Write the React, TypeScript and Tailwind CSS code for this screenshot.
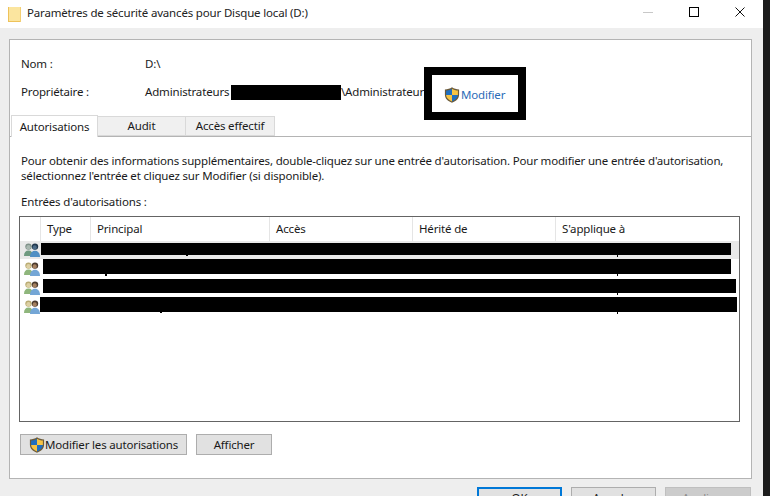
const font = { fontFamily: '"Noto Sans", "Open Sans", sans-serif' };

function Shield({ size = 16 }: { size?: number }) {
  return (
    <svg width={size} height={size} viewBox="0 0 16 16" className="shrink-0">
      <path d="M8 .3C6 1.700 3.600 2.400.9 2.500v5.200c0 3.600 2.700 6.400 7.100 8 4.400-1.600 7.100-4.400 7.100-8V2.500C12.400 2.400 10 1.700 8 .3z" fill="#6b5a3a" />
      <path d="M8 1.800C6.300 2.900 4.300 3.500 2.100 3.600V8H8z" fill="#1f6fc0" />
      <path d="M8 1.800c1.700 1.100 3.700 1.700 5.900 1.800V8H8z" fill="#f7c444" />
      <path d="M2.100 8H8v6.400C4.600 13 2.200 10.900 2.100 8z" fill="#f7c444" />
      <path d="M13.900 8H8v6.400c3.400-1.400 5.800-3.500 5.900-6.400z" fill="#1f6fc0" />
    </svg>
  );
}

function Users({ tone = 'normal' }: { tone?: 'normal' | 'cool' }) {
  const hair = tone === 'cool' ? '#7f9189' : '#b9ab72';
  const face = tone === 'cool' ? '#a9b8b0' : '#ddd0a4';
  const backBody = tone === 'cool' ? '#6f9a80' : '#8fb67c';
  const frontHair = tone === 'cool' ? '#22384d' : '#4a3a2e';
  const frontFace = tone === 'cool' ? '#4a6a86' : '#a5805f';
  const frontBody = tone === 'cool' ? '#4f8fc4' : '#74a6d6';
  return (
    <svg width="16" height="14" viewBox="0 0 16 14" className="shrink-0">
      <circle cx="4.500" cy="3.600" r="3.200" fill={hair} />
      <ellipse cx="4.500" cy="4.300" rx="2.200" ry="2.300" fill={face} />
      <path d="M0 13c0-3.600 1.700-5.500 4.500-5.500S9 9.400 9 13z" fill={backBody} />
      <circle cx="11" cy="3.600" r="3.200" fill={frontHair} />
      <ellipse cx="10.700" cy="4.400" rx="2.100" ry="2.200" fill={frontFace} />
      <path d="M6 14c0-4 2-6.300 5-6.300s5 2.300 5 6.300z" fill={frontBody} />
    </svg>
  );
}

function Bar({ className }: { className: string }) {
  return <div className={`absolute bg-black ${className}`} />;
}

const columns = [
  { label: 'Type', width: 'w-[50px]' },
  { label: 'Principal', width: 'w-[179px]' },
  { label: 'Accès', width: 'w-[143px]' },
  { label: 'Hérité de', width: 'w-[143px]' },
  { label: "S'applique à", width: 'flex-1' },
];

export default function App() {
  return (
    <div style={font} className="w-[770px] h-[496px] overflow-hidden flex bg-[#1c1c1c] text-[11.5px] tracking-[-0.17px] text-[#1a1a1a] leading-4">
      <div className="w-[763px] h-full flex flex-col bg-[#eeeeee]">
        <div className="h-7 shrink-0 bg-white flex items-center pl-2">
          <svg width="13" height="15" viewBox="0 0 13 15" className="shrink-0">
            <path d="M0 0h13v15H0z" fill="#fbe59f" />
            <path d="M0 0h1v15H0zM0 14h13v1H0z" fill="#eec25a" />
            <path d="M12 0h1v15h-1z" fill="#f3cf74" />
          </svg>
          <span className="ml-[6px] -mt-[2px] text-[#222]">Paramètres de sécurité avancés pour Disque local (D:)</span>
          <div className="ml-auto flex items-center">
            <div className="w-[46px] h-7 flex items-center justify-center -mt-[4px]">
              <div className="w-[10px] h-px bg-[#c8c8c8]" />
            </div>
            <div className="w-[46px] h-7 flex items-center justify-center -mt-[4px]">
              <div className="w-[10px] h-[10px] border border-black" />
            </div>
            <div className="w-[46px] h-7 flex items-center justify-center -mt-[4px]">
              <svg width="10" height="10" viewBox="0 0 10 10"><path d="M.5.5l9 9M9.500.5l-9 9" stroke="#111" strokeWidth="1" /></svg>
            </div>
          </div>
        </div>

        <div className="flex-1 min-h-0 px-[9px] pt-[11px]">
          <div className="relative h-[440px] w-[743px] bg-white border border-[#b4b4b4] flex flex-col">
            <div className="pl-[11px] pt-[16px] h-[75px] shrink-0">
              <div className="flex h-4 items-center">
                <span className="w-[124px]">Nom :</span>
                <span>D:\</span>
              </div>
              <div className="flex h-4 items-center mt-3">
                <span className="w-[124px]">Propriétaire :</span>
                <span className="w-[86px]">Administrateurs</span>
                <span className="w-[110px] h-[15px] bg-black" />
                <span>\Administrateur</span>
              </div>
            </div>

            <div className="absolute left-[414px] top-[27px] w-[102px] h-[53px] border-[8px] border-black bg-white flex items-center pl-[12px] pt-[2px] text-[#2b6cb8]">
              <Shield size={16} />
              <span className="ml-px">Modifier</span>
            </div>

            <div className="flex h-[22px] pl-px border-b border-[#b4b4b4] shrink-0 relative">
              <div className="w-[87px] h-[22px] bg-white border border-b-0 border-[#d9d9d9] flex items-center justify-center">Autorisations</div>
              <div className="w-[88px] h-[20px] mt-px bg-[#f0f0f0] border border-l-0 border-[#d9d9d9] flex items-center justify-center">Audit</div>
              <div className="w-[89px] h-[20px] mt-px bg-[#f0f0f0] border border-l-0 border-[#d9d9d9] flex items-center justify-center">Accès effectif</div>
            </div>

            <div className="pl-[11px] pr-2 pt-[16px] leading-[15px] h-[48px] shrink-0">
              <p className="whitespace-nowrap">Pour obtenir des informations supplémentaires, double-cliquez sur une entrée d'autorisation. Pour modifier une entrée d'autorisation,</p>
              <p className="whitespace-nowrap">sélectionnez l'entrée et cliquez sur Modifier (si disponible).</p>
            </div>

            <div className="pl-[11px] h-[18px] mt-[9px] shrink-0">Entrées d'autorisations :</div>

            <div className="relative ml-[9px] mt-[4px] w-[721px] h-[206px] border border-[#646464] shrink-0">
              <div className="flex h-[24px] pl-[20px]">
                {columns.map((c) => (
                  <div key={c.label} className={`${c.width} border-l border-[#e5e5e5] pl-[6px] flex items-center`}>{c.label}</div>
                ))}
              </div>
              <div className="flex flex-col">
                <div className="h-[18px] bg-[#e9e9e9] pl-[4px] flex items-center"><Users tone="cool" /></div>
                <div className="h-[19px] pl-[4px] flex items-center"><Users /></div>
                <div className="h-[19px] pl-[4px] flex items-center"><Users /></div>
                <div className="h-[19px] pl-[4px] flex items-center"><Users /></div>
              </div>
              <Bar className="left-[21px] top-[26px] w-[690px] h-[12px]" />
              <Bar className="left-[23px] top-[42px] w-[688px] h-[15px]" />
              <Bar className="left-[23px] top-[62px] w-[693px] h-[14px]" />
              <Bar className="left-[20px] top-[80px] w-[697px] h-[15px]" />
              <Bar className="left-[166px] top-[38px] w-[2px] h-px" />
              <Bar className="left-[597px] top-[38px] w-px h-[2px]" />
              <Bar className="left-[85px] top-[57px] w-[2px] h-[2px]" />
              <Bar className="left-[597px] top-[57px] w-px h-[2px]" />
              <Bar className="left-[597px] top-[76px] w-px h-[2px]" />
              <Bar className="left-[140px] top-[95px] w-[2px] h-px" />
              <Bar className="left-[597px] top-[95px] w-px h-[2px]" />
            </div>

            <div className="flex ml-[10px] mt-[12px] gap-[9px] shrink-0">
              <button className="w-[167px] h-[21px] bg-[#e1e1e1] border border-[#adadad] flex items-center pl-[8px]">
                <Shield size={16} />
                <span>Modifier les autorisations</span>
              </button>
              <button className="w-[76px] h-[21px] bg-[#e1e1e1] border border-[#adadad]">Afficher</button>
            </div>
          </div>

          <div className="flex justify-end gap-[9px] mt-[8px] pr-[1px] w-[743px]">
            <button className="w-[85px] h-[21px] bg-[#e1e1e1] border-2 border-[#0078d7]">OK</button>
            <button className="w-[85px] h-[21px] bg-[#e1e1e1] border border-[#adadad]">Annuler</button>
            <button className="w-[86px] h-[21px] bg-[#cccccc] border border-[#bfbfbf] text-[#8a8a8a]">Appliquer</button>
          </div>
        </div>
      </div>
    </div>
  );
}
